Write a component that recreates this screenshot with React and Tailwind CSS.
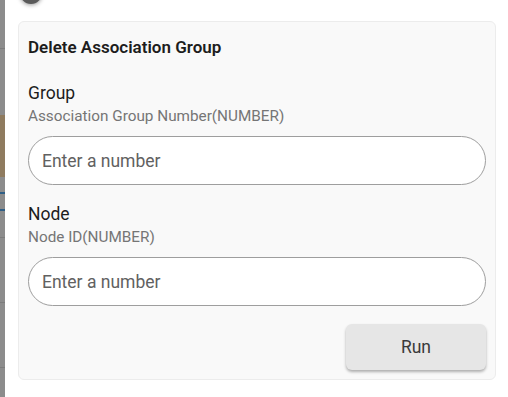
export default function App() {
    return (
        <div className="flex h-[397px] w-[508px] overflow-hidden bg-white font-['Roboto',sans-serif]">
            {/* dimmed page behind the dialog */}
            <div className="flex w-[5px] shrink-0 flex-col bg-[#8c8c8c]">
                <div className="h-[48px]" />
                <div className="h-px bg-[#7c7c7c]" />
                <div className="h-[66px]" />
                <div className="h-[62px] bg-[#8f7b5f]" />
                <div className="h-[15px]" />
                <div className="h-[2px] bg-[#2f5f86]" />
                <div className="h-[15px]" />
                <div className="h-[2px] bg-[#2f5f86]" />
                <div className="h-[26px]" />
                <div className="h-px bg-[#7c7c7c]" />
                <div className="h-[64px]" />
                <div className="h-px bg-[#7c7c7c]" />
                <div className="h-[64px]" />
                <div className="h-px bg-[#7c7c7c]" />
            </div>

            <div className="relative flex-1 pl-[13px] pr-[12px] pt-[21px]">
                <div className="absolute left-[15px] top-[-18px] h-[22px] w-[22px] rounded-full bg-[#5a5a5a] shadow-[0_1px_4px_rgba(0,0,0,0.4)]" />

                <div className="flex h-[359px] flex-col rounded-md border border-[#ececec] bg-[#f9f9f9] px-[9px] pt-[14px]">
                    <h2 className="text-[17px] font-semibold leading-[22px] text-[#1d1d1d]">Delete Association Group</h2>

                    <div className="mt-[25px] text-[17.5px] leading-[20px] text-[#1d1d1d]">Group</div>
                    <div className="mt-[4px] text-[15.3px] leading-[18px] text-[#757575]">Association Group Number(NUMBER)</div>
                    <input
                        placeholder="Enter a number"
                        className="mt-[11px] h-[49px] w-full rounded-full border border-[#9e9e9e] bg-white px-[13px] text-[17.5px] text-[#212121] outline-none placeholder:text-[#616161]"
                    />

                    <div className="mt-[19px] text-[17.5px] leading-[20px] text-[#1d1d1d]">Node</div>
                    <div className="mt-[4px] text-[15.3px] leading-[18px] text-[#757575]">Node ID(NUMBER)</div>
                    <input
                        placeholder="Enter a number"
                        className="mt-[11px] h-[49px] w-full rounded-full border border-[#9e9e9e] bg-white px-[13px] text-[17.5px] text-[#212121] outline-none placeholder:text-[#616161]"
                    />

                    <div className="mt-[18px] flex justify-end">
                        <button className="h-[46px] w-[140px] rounded-md bg-[#e6e6e6] text-[17.5px] text-[#3a3a3a] shadow-[0_2px_3px_rgba(0,0,0,0.3)]">
                            Run
                        </button>
                    </div>
                </div>
            </div>
        </div>
    )
}
